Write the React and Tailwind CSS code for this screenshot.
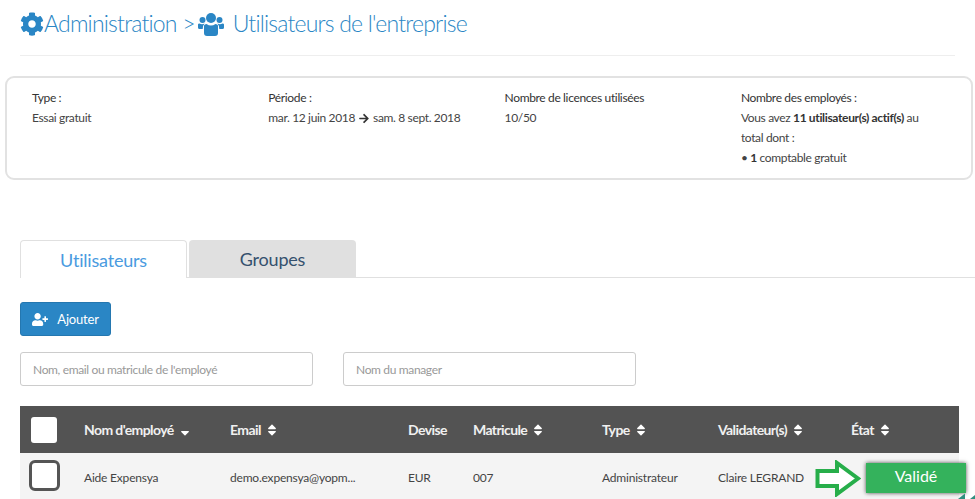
import React from 'react';
import { FaCog, FaArrowRight, FaUserPlus, FaSort, FaSortDown } from 'react-icons/fa';

const font = "font-['Lato','Open_Sans',sans-serif]";

const InfoCol = ({ children, last }) => (
  <div className={`w-[236.3px] shrink-0 text-[12px] leading-[20px] text-[#444] tracking-[-0.35px] ${last ? 'pr-[40px]' : 'pr-3'}`}>{children}</div>
);

const Head = ({ label, sort = true, down = false }) => (
  <div className="flex items-center gap-[6px] text-[14px] font-bold text-[#f0f0f0] tracking-[-0.6px]">
    <span>{label}</span>
    {down && <FaSortDown className="w-[10px] h-[14px] text-white" />}
    {sort && !down && <FaSort className="w-[10px] h-[14px] text-white" />}
  </div>
);

const UsersIcon = () => (
  <svg className="ml-[3px] mr-[9px] shrink-0" width="26" height="24" viewBox="0 0 26 24" fill="currentColor">
    <circle cx="13" cy="6" r="5" />
    <circle cx="4.5" cy="8" r="3" />
    <circle cx="21.5" cy="8" r="3" />
    <path d="M6 13.5 Q6.5 12 8.5 12 Q13 15 17.5 12 Q19.5 12 20 13.5 L20 21 Q20 24 17 24 L9 24 Q6 24 6 21 Z" />
    <path d="M0 12.5 Q0 11.5 1.5 11.5 Q4 13 6.5 11.5 Q5 13 4.7 17 L1.5 17 Q0 17 0 15.5 Z" />
    <path d="M26 12.5 Q26 11.5 24.5 11.5 Q22 13 19.5 11.5 Q21 13 21.3 17 L24.5 17 Q26 17 26 15.5 Z" />
  </svg>
);

const App = () => {
  return (
    <div className={`relative w-[975px] h-[499px] overflow-hidden bg-white ${font}`}>
      {/* Title */}
      <div className="mx-[20px] h-[56px] border-b border-[#eeeeee]">
        <div className="flex items-center h-[47px] text-[#2a86c5] text-[23px] tracking-[-0.8px] font-light">
          <FaCog className="w-[24px] h-[24px] shrink-0" />
          <span>Administration &gt;</span>
          <UsersIcon />
          <span>Utilisateurs de l'entreprise</span>
        </div>
      </div>

      {/* Info box */}
      <div className="ml-[5px] mt-[20px] w-[968px] h-[104px] flex pl-[25px] pt-[10px] border-2 border-[#e2e2e2] rounded-[9px]">
        <InfoCol>
          <div className="text-[#333]">Type :</div>
          <div>Essai gratuit</div>
        </InfoCol>
        <InfoCol>
          <div className="text-[#333]">Période :</div>
          <div className="flex items-center gap-[3px] whitespace-nowrap">
            mar. 12 juin 2018 <FaArrowRight className="w-[12px] h-[11px] text-[#333]" /> sam. 8 sept. 2018
          </div>
        </InfoCol>
        <InfoCol>
          <div className="text-[#333]">Nombre de licences utilisées</div>
          <div>10/50</div>
        </InfoCol>
        <InfoCol last>
          <div className="text-[#333]">Nombre des employés :</div>
          <div>
            Vous avez <b className="font-bold text-[#333]">11 utilisateur(s) actif(s)</b> au total dont :
          </div>
          <div>
            • <b className="font-bold text-[#333]">1</b> comptable gratuit
          </div>
        </InfoCol>
      </div>

      {/* Tabs */}
      <div className="mt-[60px] ml-[20px] flex gap-[2px] h-[38px] border-b border-[#e0e0e0]">
        <div className="w-[167px] h-[38px] flex items-center justify-center pt-[2px] bg-white border border-b-0 border-[#e0e0e0] rounded-t-[4px] text-[18px] text-[#4a9be0] tracking-[-0.2px]">
          Utilisateurs
        </div>
        <div className="w-[167px] h-[37px] flex items-center justify-center pt-[2px] bg-[#e0e0e0] rounded-t-[4px] text-[18px] text-[#35516e] tracking-[-0.2px]">
          Groupes
        </div>
      </div>

      {/* Add button */}
      <div className="mt-[24px] ml-[20px]">
        <button className="w-[91px] h-[34px] flex items-center justify-center gap-[9px] pt-[1px] bg-[#2a86c5] border border-[#2477b0] rounded-[3px] text-[13px] text-white tracking-[-0.2px]">
          <FaUserPlus className="w-[16px] h-[13px]" />
          Ajouter
        </button>
      </div>

      {/* Filters */}
      <div className="mt-[16px] ml-[20px] flex gap-[30px]">
        <div className="w-[293px] h-[34px] flex items-center px-[12px] pt-[2px] border border-[#cccccc] rounded-[3px] text-[12px] text-[#999] tracking-[-0.35px]">
          Nom, email ou matricule de l'employé
        </div>
        <div className="w-[293px] h-[34px] flex items-center px-[12px] pt-[2px] border border-[#cccccc] rounded-[3px] text-[12px] text-[#999] tracking-[-0.35px]">
          Nom du manager
        </div>
      </div>

      {/* Table */}
      <div className="mt-[20px] ml-[20px] w-[939px]">
        <div className="grid grid-cols-[64px_146px_178px_65px_129px_116px_133px_1fr] items-center h-[47px] bg-[#535353]">
          <div className="pl-[11px]">
            <div className="w-[26px] h-[26px] bg-white rounded-[3px]" />
          </div>
          <Head label="Nom d'employé" down />
          <Head label="Email" />
          <Head label="Devise" sort={false} />
          <Head label="Matricule" />
          <Head label="Type" />
          <Head label="Validateur(s)" />
          <Head label="État" />
        </div>
        <div className="grid grid-cols-[64px_146px_178px_65px_129px_116px_133px_1fr] items-center h-[46px] pt-[4px] bg-[#f4f4f4] text-[12px] text-[#444] tracking-[-0.2px]">
          <div className="pl-[9px] -mt-[5px]">
            <div className="w-[31px] h-[31px] bg-white border-[3px] border-[#555] rounded-[6px]" />
          </div>
          <div>Aide Expensya</div>
          <div>demo.expensya@yopm...</div>
          <div>EUR</div>
          <div>007</div>
          <div>Administrateur</div>
          <div>Claire LEGRAND</div>
          <div />
        </div>
      </div>

      {/* Annotation over the row */}
      <svg className="absolute left-[815px] top-[460px]" width="46" height="37" viewBox="0 0 46 37">
        <path d="M2.5 11 H22 V3 L43 18.5 L22 34 V26 H2.5 Z" fill="#fff" stroke="#27ae4a" strokeWidth="4" />
      </svg>
      <div className="absolute left-[866px] top-[463px] w-[100px] h-[30px] flex items-center justify-center pb-[4px] bg-[#34b25c] text-white text-[16px] shadow-[0_0_4px_rgba(0,0,0,0.7)]">
        Validé
      </div>
      <svg className="absolute left-[955px] top-[490px]" width="20" height="9" viewBox="0 0 20 9">
        <path d="M3 9 L10 3.5 L10 9 Z" fill="#2f8f80" />
        <path d="M15 9 L20 5 L20 9 Z" fill="#2f8f80" />
      </svg>
    </div>
  );
};

export default App;
